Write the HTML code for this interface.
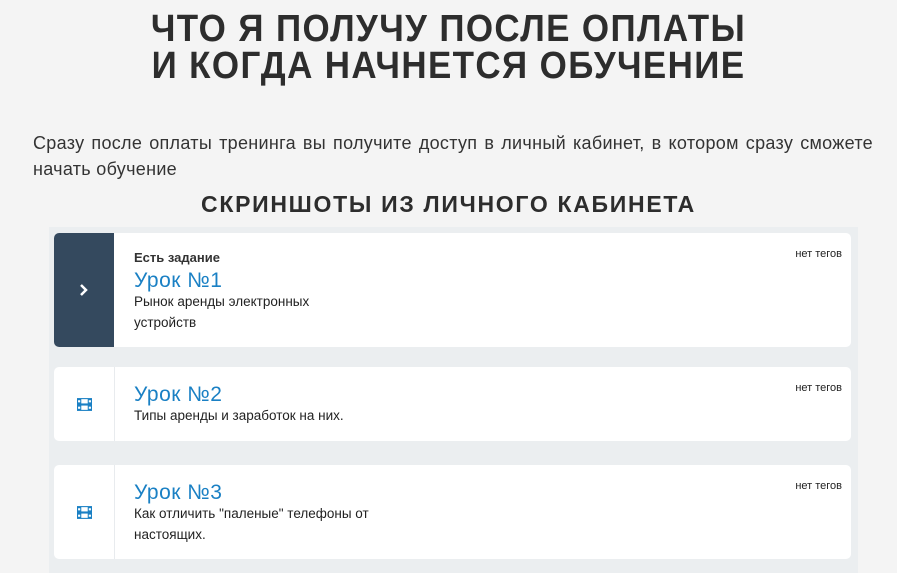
<!DOCTYPE html>
<html><head><meta charset="utf-8"><style>
body{margin:0;width:897px;height:573px;background:#f4f4f4;overflow:hidden;font-family:"Liberation Sans",sans-serif;position:relative}
.t{position:absolute;left:0;width:897px;text-align:center;font-weight:bold;color:#2d2d2d;text-transform:uppercase;white-space:nowrap}
.h1{top:11px;font-size:38px;line-height:37px;letter-spacing:1.5px;transform:scaleX(0.92)}
.p{position:absolute;left:33px;width:840px;top:130px;font-size:18px;line-height:26px;color:#333;text-align:justify;text-align-last:left;letter-spacing:0.3px}
.h2{top:190px;font-size:23px;line-height:28px;letter-spacing:1.7px}
.panel{position:absolute;left:49px;top:227px;width:809px;height:346px;background:#ebeef0}
.card{position:absolute;left:54px;width:797px;background:#fff;border-radius:5px;overflow:hidden}
.side{position:absolute;left:0;top:0;bottom:0;width:60px;border-right:1px solid #e8ebee;display:flex;align-items:center;justify-content:center}
.tag{position:absolute;right:9px;top:15px;font-size:11px;color:#222}
.ttl{position:absolute;left:80px;font-size:21px;color:#1a80c4;letter-spacing:0.5px}
.d{position:absolute;left:80px;font-size:13.5px;line-height:21px;color:#222}
</style></head><body>
<div class="t h1">Что я получу после оплаты<br>и когда начнется обучение</div>
<div class="p">Сразу после оплаты тренинга вы получите доступ в личный кабинет, в котором сразу сможете начать обучение</div>
<div class="t h2">Скриншоты из личного кабинета</div>
<div class="panel"></div>
<div class="card" style="top:233px;height:114px">
 <div class="side" style="background:#34495e;border:none"><svg width="12" height="14" viewBox="0 0 12 14"><path d="M3 2l5 5-5 5" stroke="#fff" stroke-width="2.5" fill="none"/></svg></div>
 <div class="tag">нет тегов</div>
 <div style="position:absolute;left:80px;top:17px;font-size:13px;font-weight:bold;color:#333">Есть задание</div>
 <div class="ttl" style="top:36px">Урок №1</div>
 <div class="d" style="top:58px">Рынок аренды электронных<br>устройств</div>
</div>
<div class="card" style="top:367px;height:74px">
 <div class="side"><svg width="15" height="13" viewBox="0 0 14 12"><rect x="0" y="0" width="14" height="12" fill="#1a80c4"/><rect x="4" y="1" width="6" height="4" fill="#fff"/><rect x="4" y="7" width="6" height="4" fill="#fff"/><rect x="1" y="2" width="2" height="2" fill="#fff"/><rect x="1" y="8" width="2" height="2" fill="#fff"/><rect x="11" y="2" width="2" height="2" fill="#fff"/><rect x="11" y="8" width="2" height="2" fill="#fff"/></svg></div>
 <div class="tag">нет тегов</div>
 <div class="ttl" style="top:16px">Урок №2</div>
 <div class="d" style="top:38px">Типы аренды и заработок на них.</div>
</div>
<div class="card" style="top:465px;height:94px">
 <div class="side"><svg width="15" height="13" viewBox="0 0 14 12"><rect x="0" y="0" width="14" height="12" fill="#1a80c4"/><rect x="4" y="1" width="6" height="4" fill="#fff"/><rect x="4" y="7" width="6" height="4" fill="#fff"/><rect x="1" y="2" width="2" height="2" fill="#fff"/><rect x="1" y="8" width="2" height="2" fill="#fff"/><rect x="11" y="2" width="2" height="2" fill="#fff"/><rect x="11" y="8" width="2" height="2" fill="#fff"/></svg></div>
 <div class="tag">нет тегов</div>
 <div class="ttl" style="top:16px">Урок №3</div>
 <div class="d" style="top:38px">Как отличить "паленые" телефоны от<br>настоящих.</div>
</div>
</body></html>
